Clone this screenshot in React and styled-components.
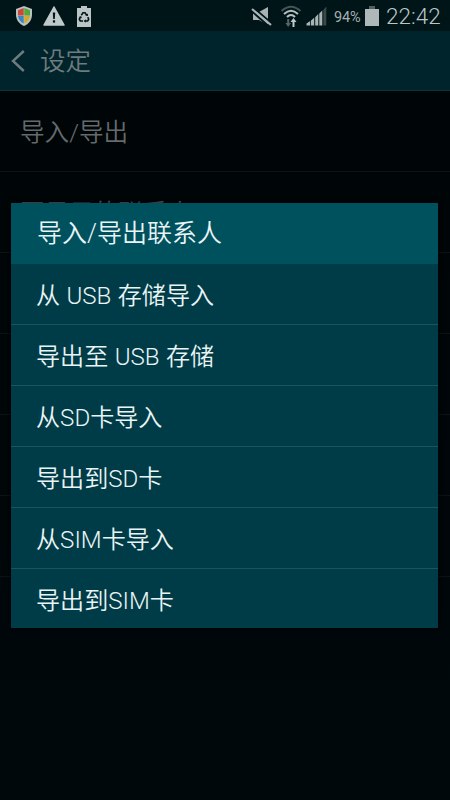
import React from 'react'
import styled, { createGlobalStyle } from 'styled-components'

const GlobalStyle = createGlobalStyle`
  * {
    box-sizing: border-box;
  }
  body {
    margin: 0;
    background: #000609;
    font-family: Roboto, "Noto Sans CJK SC", sans-serif;
    font-weight: 300;
  }
`

const Screen = styled.div`
  position: relative;
  width: 450px;
  height: 800px;
  overflow: hidden;
  background: linear-gradient(#000507, #000609 60%, #00080b);
`

const StatusBar = styled.div`
  display: flex;
  justify-content: space-between;
  height: 31px;
  padding: 0 9px 0 15px;
  background: #001518;
  color: #bcc5c6;
`

const StatusGroup = styled.div`
  display: flex;
  align-items: center;
  height: 32px;
`

const StatusIcon = styled.svg`
  display: block;
  flex: none;
  margin-left: ${props => props.$gap || 0}px;
`

const Percent = styled.span`
  width: 29px;
  margin-left: 7px;
  padding-top: 2px;
  font-size: 14.5px;
  font-weight: 400;
  letter-spacing: -0.1px;
  color: #a5afb0;
`

const Clock = styled.span`
  width: 55px;
  margin-left: 7px;
  font-size: 22.5px;
  line-height: 32px;
  white-space: nowrap;
`

const Header = styled.header`
  display: flex;
  align-items: center;
  height: 60px;
  padding-left: 11px;
  background: #00242b;
  border-bottom: 1px solid #0c3439;
  color: #6f7b7e;
`

const HeaderTitle = styled.h1`
  margin: 0 0 0 14px;
  font-size: 25.5px;
  font-weight: 350;
  line-height: 64px;
`

const SettingRow = styled.div`
  height: 81px;
  padding-left: 20px;
  border-bottom: 1px solid #0b1315;
  font-size: 24.6px;
  font-weight: 350;
  line-height: 83px;
  color: #656b6d;
`

const Dialog = styled.section`
  position: absolute;
  top: 203px;
  left: 11px;
  width: 427px;
  height: 425px;
  background: #003c47;
  color: #eaf4f5;
  box-shadow: 0 0 5px #000;
`

const DialogTitle = styled.h2`
  height: 61px;
  margin: 0;
  padding-left: 26px;
  background: #00515e;
  font-size: 25px;
  font-weight: 350;
  line-height: 62px;
`

const DialogItem = styled.div`
  height: 61px;
  padding-left: 25px;
  border-bottom: ${props => (props.$last ? 'none' : '1px solid #1b545d')};
  font-size: 24.1px;
  font-weight: 350;
  line-height: 64px;
  white-space: pre;
  word-spacing: 0.5px;
`

const Shield = () => (
  <StatusIcon width="18" height="22" viewBox="0 0 18 22">
    <path d="M9 1 L17 4 V10 C17 15 13.5 19 9 21 C4.500 19 1 15 1 10 V4 Z" fill="#b9c2c3" />
    <path d="M8.700 3 V10.500 H3 V5.200 Z" fill="#cb4936" />
    <path d="M9.300 3 L15 5.200 V10.500 H9.300 Z" fill="#57a638" />
    <path d="M3 11 H8.700 V18.600 C5.500 17 3.400 14.500 3 11 Z" fill="#3d85bb" />
    <path d="M9.300 11 H15 C14.600 14.500 12.500 17 9.300 18.600 Z" fill="#d6a928" />
  </StatusIcon>
)

const Warning = () => (
  <StatusIcon $gap={10} width="22" height="20" viewBox="0 0 22 20">
    <path d="M11 1 L21 19 H1 Z" fill="#c0c9ca" stroke="#c0c9ca" strokeWidth="1.500" strokeLinejoin="round" />
    <path d="M9.800 6.500 H12.200 L11.800 13 H10.200 Z" fill="#001518" />
    <rect x="9.900" y="14.300" width="2.200" height="2.300" fill="#001518" />
  </StatusIcon>
)

const RecycleBattery = () => (
  <StatusIcon $gap={12} width="14" height="21" viewBox="0 0 14 21">
    <path d="M4 0 H10 V2 H14 V21 H0 V2 H4 Z" fill="#bcc5c6" />
    <g fill="none" stroke="#001518" strokeWidth="1.600">
      <path d="M4.300 9.300 L6 6.800 H8 L9.700 9.300" />
      <path d="M10.800 11.200 L11.700 13.200 L10.700 15 H8" />
      <path d="M6 15 H3.300 L2.300 13.200 L3.500 11" />
    </g>
    <path d="M8.500 9.600 L11 9.900 L11 7.500 Z M8.700 13.200 V16.800 L6.600 15 Z M1.800 11.300 L4.100 10 L4.900 12.300 Z" fill="#001518" />
  </StatusIcon>
)

const Muted = () => (
  <StatusIcon width="22" height="20" viewBox="0 0 22 20">
    <path d="M2 6 H8 L17 1 V19 L8 14 H2 Z" fill="#a9b3b4" />
    <path d="M0 4.500 L18 20.500" stroke="#001518" strokeWidth="2" />
    <path d="M2 1.500 L21 17.500" stroke="#001518" strokeWidth="2" />
    <path d="M1 3 L20 19" stroke="#a9b3b4" strokeWidth="2.200" />
  </StatusIcon>
)

const Wifi = () => (
  <StatusIcon $gap={7} width="22" height="23" viewBox="0 0 22 23">
    <g fill="none" strokeWidth="2">
      <path d="M1.500 6 Q11 -2.500 20.500 6" stroke="#465558" />
      <path d="M4 9 Q11 2.500 18 9" stroke="#b8c1c2" />
      <path d="M7 12 Q11 8 15 12" stroke="#b8c1c2" />
    </g>
    <path d="M7.200 14 H9.200 V18 H11 L8.200 22 L5.400 18 H7.200 Z" fill="#566467" />
    <path d="M12.500 22 V17 H10.500 L13.500 13 L16.500 17 H14.500 V22 Z" fill="#c0c9ca" />
  </StatusIcon>
)

const Signal = () => (
  <StatusIcon $gap={4} width="21" height="20" viewBox="0 0 21 20">
    <path d="M0.500 17.500 L4.200 15 V19.500 H0.500 Z M5 14.500 L8.200 11.800 V19.500 H5 Z M9.200 11.200 L12.300 8 V19.500 H9.200 Z M13.300 7.400 L16.300 4.500 V19.500 H13.300 Z" fill="#aab4b5" />
    <path d="M17.300 4 L20.300 0.500 V19.500 H17.300 Z" fill="#38484b" />
  </StatusIcon>
)

const Battery = () => (
  <StatusIcon $gap={2} width="14" height="20" viewBox="0 0 14 20">
    <rect x="4" y="0" width="6" height="3" fill="#526063" />
    <rect x="0" y="3" width="14" height="17" fill="#aeb8b9" />
  </StatusIcon>
)

const Back = () => (
  <svg width="15" height="24" viewBox="0 0 15 24">
    <path d="M12.800 2 L2 12 L12.800 22" fill="none" stroke="#6f7b7e" strokeWidth="2.400" />
  </svg>
)

const settings = ['导入/导出', '要显示的联系人', '', '', '', '']

const items = [
  '从 USB 存储导入',
  '导出至 USB 存储',
  '从SD卡导入',
  '导出到SD卡',
  '从SIM卡导入',
  '导出到SIM卡',
]

const App = () => {
  return (
    <Screen>
      <GlobalStyle />
      <StatusBar>
        <StatusGroup>
          <Shield />
          <Warning />
          <RecycleBattery />
        </StatusGroup>
        <StatusGroup>
          <Muted />
          <Wifi />
          <Signal />
          <Percent>94%</Percent>
          <Battery />
          <Clock>22:42</Clock>
        </StatusGroup>
      </StatusBar>
      <Header>
        <Back />
        <HeaderTitle>设定</HeaderTitle>
      </Header>
      {settings.map((name, i) => (
        <SettingRow key={i}>{name}</SettingRow>
      ))}
      <Dialog>
        <DialogTitle>导入/导出联系人</DialogTitle>
        {items.map((item, i) => (
          <DialogItem key={item} $last={i === items.length - 1}>{item}</DialogItem>
        ))}
      </Dialog>
    </Screen>
  )
}

export default App
